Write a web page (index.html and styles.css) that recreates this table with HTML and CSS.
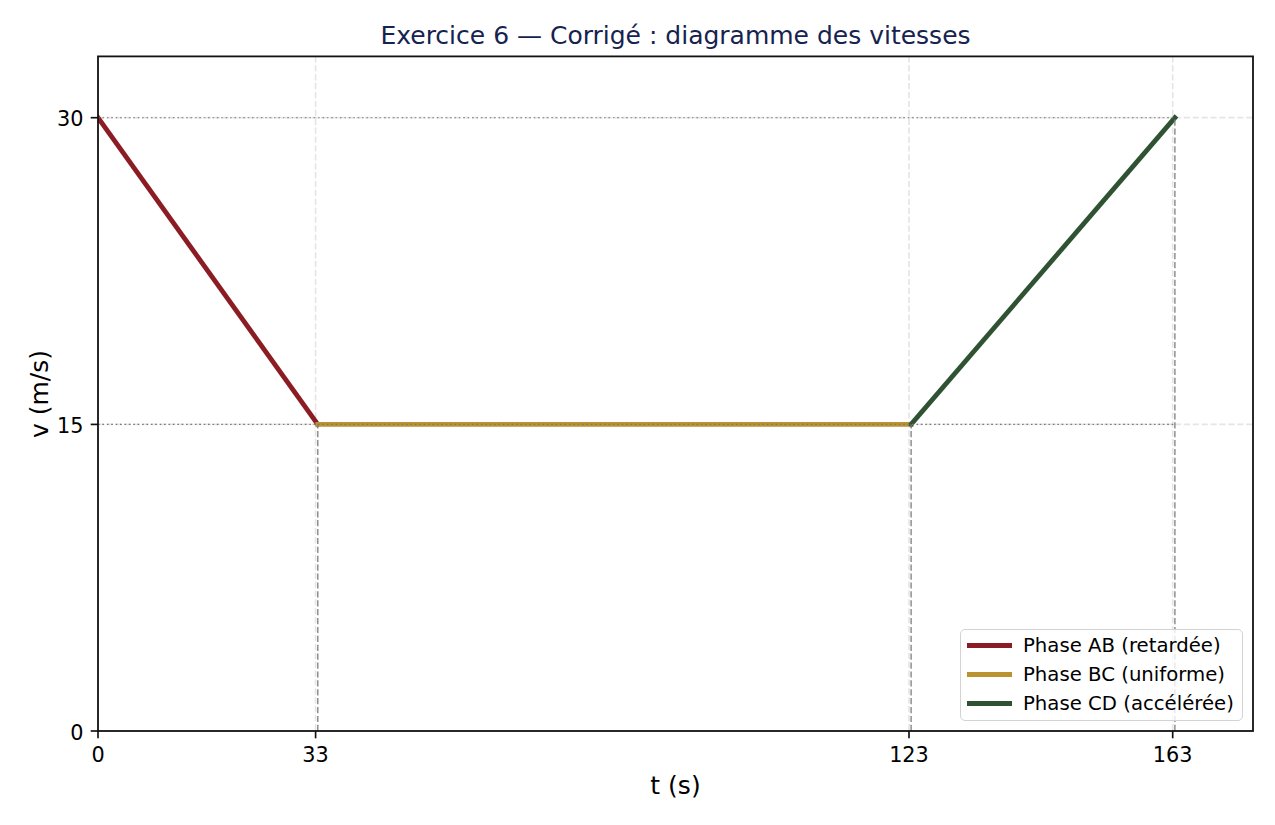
FILE: index.html
```html
<!DOCTYPE html>
<html lang="fr">
<head>
<meta charset="utf-8">
<title>Exercice 6 — Corrigé : diagramme des vitesses</title>
<link rel="stylesheet" href="styles.css">
</head>
<body>
<div class="figure">
  <h1 class="title">Exercice 6 — Corrigé : diagramme des vitesses</h1>
  <svg class="chart" width="1275" height="775" viewBox="0 0 1275 775" xmlns="http://www.w3.org/2000/svg">
    <defs>
      <clipPath id="axes-clip">
        <rect x="98" y="6.4" width="1155" height="674.6"/>
      </clipPath>
    </defs>
    <!-- grid -->
    <g class="grid">
      <line x1="315.6" y1="6.4" x2="315.6" y2="681"/>
      <line x1="909" y1="6.4" x2="909" y2="681"/>
      <line x1="1172.7" y1="6.4" x2="1172.7" y2="681"/>
      <line x1="98" y1="374.4" x2="1253" y2="374.4"/>
      <line x1="98" y1="67.7" x2="1253" y2="67.7"/>
    </g>
    <!-- data -->
    <g clip-path="url(#axes-clip)">
      <line class="seg seg-ab" x1="98" y1="67.7" x2="317.8" y2="374.4"/>
      <line class="seg seg-bc" x1="317.8" y1="374.4" x2="911.1" y2="374.4"/>
      <line class="seg seg-cd" x1="911.1" y1="374.4" x2="1174.9" y2="67.7"/>
    </g>
    <!-- reference lines -->
    <g class="ref-h">
      <line x1="98" y1="67.7" x2="1174.9" y2="67.7"/>
      <line x1="98" y1="374.4" x2="1174.9" y2="374.4"/>
    </g>
    <g class="ref-v">
      <line x1="317.8" y1="681" x2="317.8" y2="374.4"/>
      <line x1="911.1" y1="681" x2="911.1" y2="374.4"/>
      <line x1="1174.9" y1="681" x2="1174.9" y2="67.7"/>
    </g>
    <!-- spines -->
    <rect class="spines" x="98" y="6.4" width="1155" height="674.6"/>
    <!-- ticks -->
    <g class="ticks">
      <line x1="98" y1="681" x2="98" y2="688.3"/>
      <line x1="315.6" y1="681" x2="315.6" y2="688.3"/>
      <line x1="909" y1="681" x2="909" y2="688.3"/>
      <line x1="1172.7" y1="681" x2="1172.7" y2="688.3"/>
      <line x1="98" y1="681" x2="90.7" y2="681"/>
      <line x1="98" y1="374.4" x2="90.7" y2="374.4"/>
      <line x1="98" y1="67.7" x2="90.7" y2="67.7"/>
    </g>
    <g class="tick-label tick-x">
      <text x="98" y="711.6">0</text>
      <text x="315.6" y="711.6">33</text>
      <text x="909" y="711.6">123</text>
      <text x="1172.7" y="711.6">163</text>
    </g>
    <g class="tick-label tick-y">
      <text x="83.4" y="76">30</text>
      <text x="83.4" y="382.8">15</text>
      <text x="83.4" y="689.5">0</text>
    </g>
    <text class="axis-label" x="675.5" y="744">t (s)</text>
    <text class="axis-label" transform="translate(48 344) rotate(-90)" x="0" y="0">v (m/s)</text>
  </svg>
  <div class="legend">
    <div class="legend-row"><span class="handle handle-ab"></span><span class="legend-text">Phase AB (retardée)</span></div>
    <div class="legend-row"><span class="handle handle-bc"></span><span class="legend-text">Phase BC (uniforme)</span></div>
    <div class="legend-row"><span class="handle handle-cd"></span><span class="legend-text">Phase CD (accélérée)</span></div>
  </div>
</div>
</body>
</html>
```

FILE: styles.css
```css
html, body {
  margin: 0;
  padding: 0;
  background: #ffffff;
}

body {
  font-family: "DejaVu Sans", "Liberation Sans", sans-serif;
  color: #000000;
}

.figure {
  position: relative;
  width: 1275px;
  height: 825px;
  overflow: hidden;
  background: #ffffff;
}

.title {
  margin: 0;
  padding: 21px 22px 0 98px;
  height: 29px;
  font-size: 25px;
  line-height: 29px;
  font-weight: normal;
  text-align: center;
  color: #16234f;
  white-space: nowrap;
}

.chart {
  display: block;
}

.grid line {
  stroke: #e5e5e5;
  stroke-width: 1.67;
  stroke-dasharray: 6.2 2.7;
  fill: none;
}

.seg {
  stroke-width: 4.8;
  stroke-linecap: square;
  fill: none;
}

.seg-ab { stroke: #8b1c24; }
.seg-bc { stroke: #bb9230; }
.seg-cd { stroke: #2f5232; }

.ref-h line {
  stroke: #7a7a7a;
  stroke-width: 1.1;
  stroke-dasharray: 1.7 2.7;
}

.ref-v line {
  stroke: #7f7f7f;
  stroke-width: 1.3;
  stroke-dasharray: 6.2 2.7;
}

.spines {
  fill: none;
  stroke: #111111;
  stroke-width: 1.8;
}

.ticks line {
  stroke: #111111;
  stroke-width: 1.67;
}

.tick-label text {
  font-family: "DejaVu Sans", sans-serif;
  font-size: 20.8px;
  fill: #000000;
}

.tick-x text { text-anchor: middle; }
.tick-y text { text-anchor: end; }

.axis-label {
  font-family: "DejaVu Sans", sans-serif;
  font-size: 25px;
  fill: #000000;
  text-anchor: middle;
}

.legend {
  position: absolute;
  left: 960px;
  top: 629px;
  width: 283px;
  height: 92px;
  box-sizing: border-box;
  padding: 1px 0 0 6px;
  border: 1.5px solid #d3d3d3;
  border-radius: 5px;
  background: rgba(255, 255, 255, 0.8);
}

.legend-row {
  display: flex;
  align-items: center;
  height: 29px;
}

.handle {
  display: block;
  width: 45px;
  height: 4.4px;
  margin-right: 11px;
  flex: none;
}

.handle-ab { background: #8b1c24; }
.handle-bc { background: #bb9230; }
.handle-cd { background: #2f5232; }

.legend-text {
  font-size: 19.7px;
  line-height: 29px;
  white-space: nowrap;
}
```
